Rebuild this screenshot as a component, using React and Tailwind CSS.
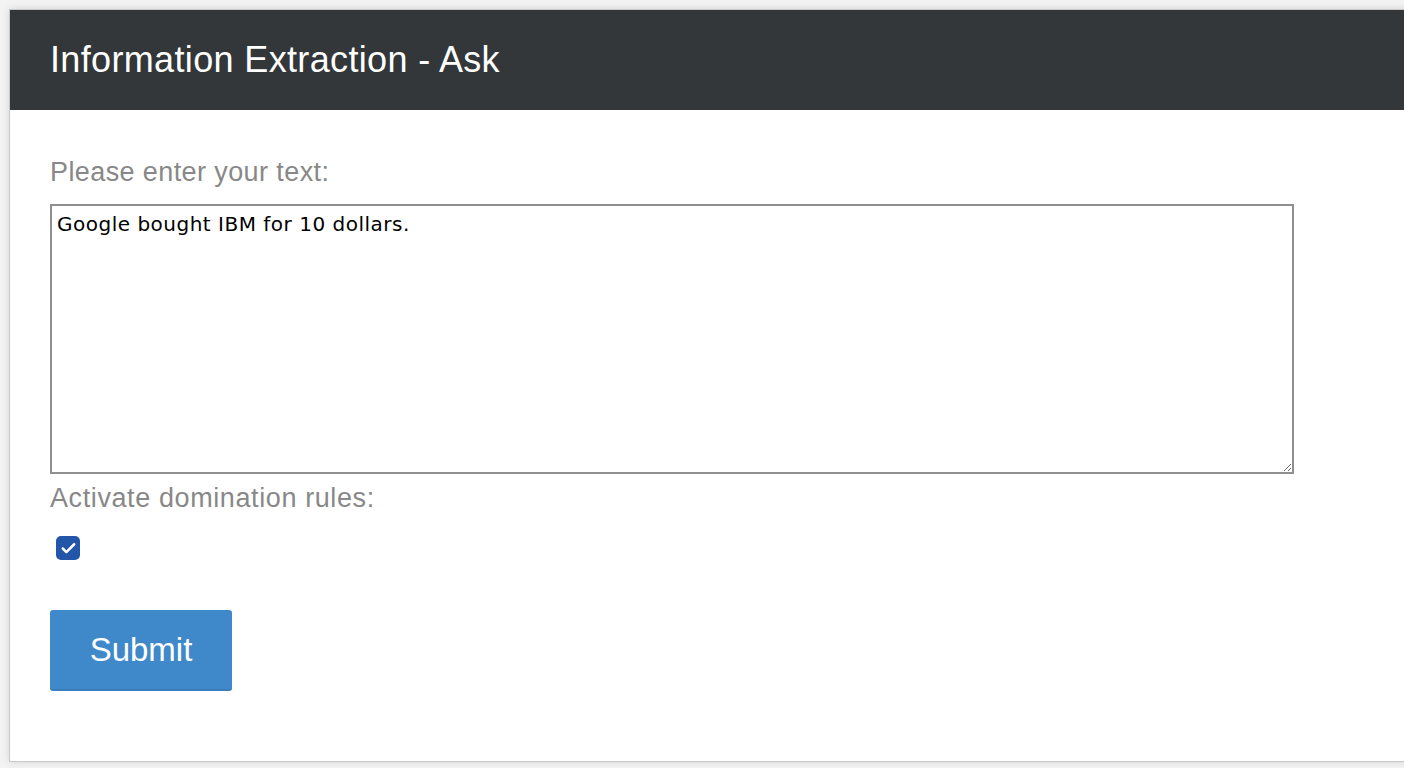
import { Check } from "lucide-react";

const font = { fontFamily: '"Liberation Sans", Arial, sans-serif' };

export default function App() {
  return (
    <div className="w-[1404px] h-[768px] overflow-hidden bg-[#f3f3f3] pt-[9px] pl-[9px]" style={font}>
      <div className="w-[1420px] h-[753px] bg-white border border-[#c9c9c9] shadow-[0_0_8px_rgba(0,0,0,0.12)]">
        {/* header */}
        <div className="h-[100px] bg-[#33373a] flex items-center pl-10">
          <h1 className="text-white text-[36px] leading-none tracking-[0.35px]">Information Extraction - Ask</h1>
        </div>

        {/* form */}
        <div className="pl-10 pt-[48px]">
          <label className="block text-[27px] leading-[28px] tracking-[0.4px] text-[#888]">Please enter your text:</label>
          <textarea
            className="mt-[18px] block w-[1244px] h-[270px] border-2 border-[#8f8f8f] px-[5px] py-[7px] text-[20px] leading-[22px] tracking-[0.5px] text-black outline-none resize"
            style={{ fontFamily: '"DejaVu Sans", Verdana, sans-serif' }}
            defaultValue="Google bought IBM for 10 dollars."
          />
          <label className="block mt-[10px] text-[27px] leading-[28px] tracking-[0.6px] text-[#888]">Activate domination rules:</label>
          <div className="mt-[24px] ml-[6px] w-6 h-6 rounded-[5px] bg-[#2356a8] flex items-center justify-center">
            <Check className="w-[17px] h-[17px] text-white" strokeWidth={3.5} />
          </div>
          <button className="mt-[50px] w-[182px] h-[81px] rounded-[3px] bg-[#3f89ca] border-b-2 border-[#3a7dba] text-white text-[33px] leading-none">
            Submit
          </button>
        </div>
      </div>
    </div>
  );
}
